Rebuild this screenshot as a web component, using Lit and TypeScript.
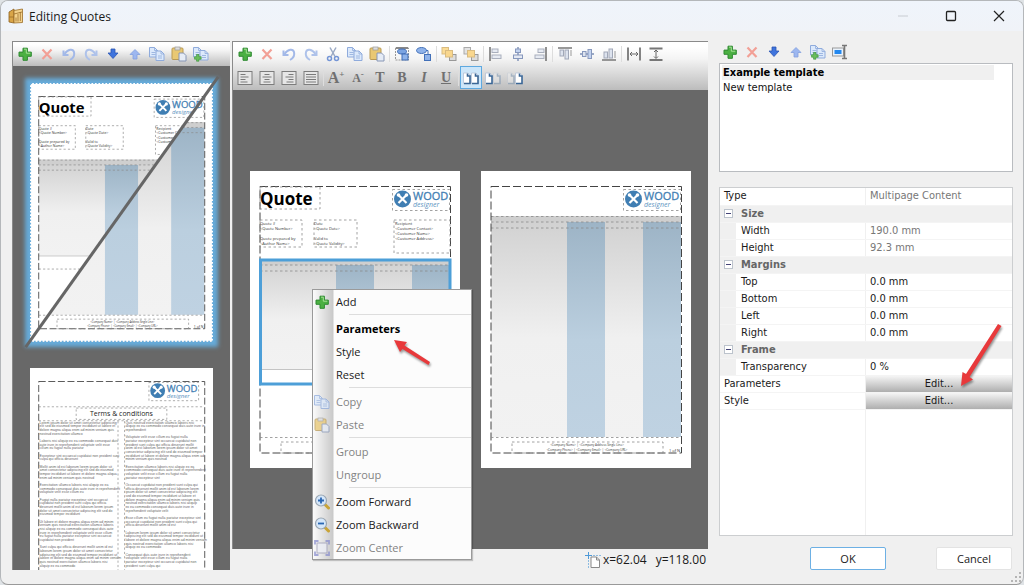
import { LitElement, html, svg, css } from "lit";
import { customElement, property } from "lit/decorators.js";
import { classMap } from "lit/directives/class-map.js";

const plus = svg`<path d="M6 2.200h4.400v3.900h3.900v4.200h-3.900v4H6v-4H2V6.100h4z" fill="#4cb043" stroke="#2f8a32" stroke-width="1"/><path d="M7 3.200h2.300v4h4" fill="none" stroke="#a5e096"/>`;
const sheet = (x: number, y: number) => svg`<path d="M${x} ${y}h5l3 3v6.500h-8z" fill="#dce9fb" stroke="#8fabdc"/><path d="M${x + 5} ${y}v3h3M${x + 2} ${y + 5}h4M${x + 2} ${y + 7}h4" fill="none" stroke="#8fabdc" stroke-width=".8"/>`;
const clip = svg`<rect x="1" y="2" width="11" height="11.500" rx="1" fill="#e9c873" stroke="#b99a55"/><rect x="4" y="1" width="5" height="3" fill="#ddd" stroke="#999" stroke-width=".7"/><path d="M8 7h4.500l2.500 2.500V15H8z" fill="#e6ecf6" stroke="#8796b5"/>`;
const alignBox = (lines: string) => svg`<rect x="1" y="1.500" width="14" height="13" fill="#e6e6e6" stroke="#7c7c7c"/><path d="${lines}" stroke="#7a7a7a" fill="none"/>`;
const squares = (front: boolean) => svg`
  <rect x="1" y="1.500" width="6.500" height="6.500" fill="${front ? "#fbdc96" : "#e3e3e3"}" stroke="${front ? "#d9bb80" : "#aaa"}"/>
  <rect x="8.500" y="8.500" width="6.500" height="6" fill="#dcdcdc" stroke="#999"/>
  <rect x="4.500" y="4.500" width="7" height="6.500" fill="#f9d78e" stroke="#d9bb80"/>`;
const pagesIcon = (a: number, b: number) => svg`
  <g opacity="${a}"><path d="M.5 3h4l3 2.500v8h-7z" fill="#fff" stroke="#b5c2d6" stroke-width=".8"/><path d="M4.500 3.500v2.500h2.500v7.500H1" fill="none" stroke="#3b6796" stroke-width="1.600"/></g>
  <g opacity="${b}"><path d="M8.500 3h4l3 2.500v8h-7z" fill="#fff" stroke="#b5c2d6" stroke-width=".8"/><path d="M12.500 3.500v2.500H15v7.500H9" fill="none" stroke="#3b6796" stroke-width="1.600"/></g>`;
const glass = (sign: string) => svg`<path d="M11 10.500l3.500 3.500" stroke="#c9a437" stroke-width="3" stroke-linecap="round"/><circle cx="7" cy="6.500" r="5.500" fill="#d5e7fa" stroke="#9aa6b2" stroke-width="1.200"/><path d="${sign}" stroke="#2a67b3" stroke-width="1.800"/>`;
const arrowDown = svg`<path d="M6 3h4V7h3l-5 5.500L3 7h3z" fill="#3f74dd" stroke="#2b56b4" stroke-width=".8"/>`;
const arrowUp = svg`<path d="M6 13h4V8.500h3L8 3.500 3 8.500h3z" fill="#9db7f0" stroke="#839fdd" stroke-width=".8"/>`;

const ICONS: Record<string, unknown> = {
  add: plus,
  remove: svg`<path d="M3.500 3.500l9 9.500M12.500 3.500l-9 9.500" stroke="#f2a096" stroke-width="2.200"/>`,
  undo: svg`<path d="M2.500 4.500v4.500h5" fill="none" stroke="#a3b9e8" stroke-width="2"/><path d="M3.500 8C7 3 12 2.500 13 6S11.500 12.500 9 14" fill="none" stroke="#a3b9e8" stroke-width="2"/>`,
  redo: svg`<path d="M13.500 4.500v4.500h-5" fill="none" stroke="#aec2ea" stroke-width="2"/><path d="M12.500 8C9 3 4 2.500 3 6S4.500 12.500 7 14" fill="none" stroke="#aec2ea" stroke-width="2"/>`,
  down: arrowDown,
  up: arrowUp,
  cut: svg`<path d="M5 1.500l5 9M11 1.500l-5 9" stroke="#9aa9c4" stroke-width="1.500"/><circle cx="4.500" cy="12.500" r="2" fill="none" stroke="#7596d6" stroke-width="1.500"/><circle cx="11.500" cy="12.500" r="2" fill="none" stroke="#7596d6" stroke-width="1.500"/>`,
  copy: svg`${sheet(0.5, 1.5)}${sheet(7, 5)}`,
  paste: clip,
  duplicate: svg`${sheet(0.5, 1.5)}${sheet(7, 4.5)}<path d="M3.500 8.500h2.500v2.200h2.200v2.500H6v2H3.500v-2h-2v-2.500h2z" fill="#69bd5c" stroke="#3a923a" stroke-width=".6"/>`,
  rename: svg`<rect x="0.500" y="4" width="11" height="8" fill="#eaf2fb" stroke="#999"/><rect x="2.500" y="6" width="7" height="4" fill="#2388ef"/><path d="M10 1.500h5M12.500 1.500v13M10 14.500h5" stroke="#777" stroke-width="1.600" fill="none"/>`,
  group: svg`<path d="M1.500 2h13v12h-13z" fill="none" stroke="#999" stroke-dasharray="2 1"/><rect x="2" y="1" width="12" height="2" fill="#888"/><ellipse cx="8" cy="5.500" rx="4.500" ry="2.500" fill="#7ba4e2" stroke="#3f6cb5"/><rect x="8" y="8" width="6" height="6" fill="#8fb3ea" stroke="#3f6cb5"/>`,
  ungroup: svg`<ellipse cx="5.500" cy="4.500" rx="5" ry="3" fill="#8fb3ea" stroke="#4270b8"/><path d="M10 4.500h2v4" fill="none" stroke="#4270b8"/><rect x="8.500" y="8.500" width="6" height="6" fill="#8fb3ea" stroke="#4270b8"/>`,
  front: squares(true),
  back: squares(false),
  alignLeft: svg`<path d="M2 1v14" stroke="#777" stroke-width="1.600"/><rect x="4" y="3" width="6" height="3.500" fill="#e6eaf2" stroke="#a9afbd"/><rect x="4" y="9" width="9" height="3.500" fill="#e6eaf2" stroke="#a9afbd"/>`,
  alignMid: svg`<path d="M8 1v14" stroke="#7c8fb5" stroke-width="1.400"/><rect x="5.500" y="3" width="5" height="3.500" fill="#c3d3ef" stroke="#8798bd"/><rect x="3.500" y="9" width="9" height="3.500" fill="#e4e9f3" stroke="#8798bd"/>`,
  alignRight: svg`<path d="M14 1v14" stroke="#777" stroke-width="1.600"/><rect x="6" y="3" width="6" height="3.500" fill="#e6eaf2" stroke="#a9afbd"/><rect x="3" y="9" width="9" height="3.500" fill="#e6eaf2" stroke="#a9afbd"/>`,
  alignTop: svg`<path d="M1 2h14" stroke="#777" stroke-width="1.600"/><rect x="3" y="4" width="3.500" height="6" fill="#dde3ee" stroke="#a1a8b8"/><rect x="8" y="4" width="3.500" height="9" fill="#dde3ee" stroke="#a1a8b8"/><path d="M14 4v6" stroke="#999"/>`,
  alignCenter: svg`<path d="M1 8h14" stroke="#7c8fb5" stroke-width="1.400"/><rect x="3.500" y="5.500" width="3.500" height="5" fill="#dde3ee" stroke="#8798bd"/><rect x="9" y="3.500" width="3.500" height="9" fill="#c3d3ef" stroke="#8798bd"/>`,
  alignBottom: svg`<path d="M1 14h14" stroke="#777" stroke-width="1.600"/><rect x="3" y="6" width="3.500" height="6" fill="#dde3ee" stroke="#a1a8b8"/><rect x="8" y="3" width="3.500" height="9" fill="#dde3ee" stroke="#a1a8b8"/><path d="M14 5v7" stroke="#999"/>`,
  sameWidth: svg`<path d="M2 1.500v13M14 1.500v13" stroke="#777" stroke-width="1.800"/><path d="M4 8h8M6 6L4 8l2 2M10 6l2 2-2 2" fill="none" stroke="#666"/>`,
  sameHeight: svg`<path d="M1.500 2.500h13M1.500 14h13" stroke="#777" stroke-width="1.800"/><path d="M8 4v8M6 6l2-2 2 2M6 10.500l2 2 2-2" fill="none" stroke="#666"/>`,
  paraLeft: alignBox("M3.500 4.500h5M3.500 7h8M3.500 9.500h5M3.500 12h7"),
  paraCenter: alignBox("M5.500 4.500h5M3.500 7h9M5.500 9.500h5M4.500 12h7"),
  paraRight: alignBox("M7.500 4.500h5M4.500 7h8M7.500 9.500h5M5.500 12h7"),
  paraJustify: alignBox("M3 4.500h10M3 7h10M3 9.500h10M3 12h10"),
  pagesBoth: pagesIcon(1, 1),
  pagesFirst: pagesIcon(1, 0.3),
  pagesLast: pagesIcon(0.3, 1),
  zoomIn: glass("M4 6.500h6M7 3.500v6"),
  zoomOut: glass("M4 6.500h6"),
  zoomCenter: svg`<rect x="3" y="3" width="10" height="10" fill="#eceef6" stroke="#9a9ab4"/><path d="M1 4.500V1h3.500M11.500 1H15v3.500M15 11.500V15h-3.500M4.500 15H1v-3.500" fill="none" stroke="#8a8fce" stroke-width="1.800"/>`,
  cursor: svg`<path d="M6 5h5.500l3 3v7.500H6z" fill="#fff" stroke="#8a8a8a"/><path d="M11.500 5v3h3" fill="none" stroke="#8a8a8a"/><path d="M0 3.500h7M3.500 0v7" stroke="#4f9ad8"/><path d="M8 3.500h8M3.500 8v8" stroke="#8dbbe0" stroke-dasharray="2 1"/>`,
  app: svg`<path d="M1 4l5-3v14l-5-1z" fill="#d9a548" stroke="#8d611f" stroke-width=".8"/><path d="M6 2.500L14.500 1v13.500L6 15z" fill="#f5d38c" stroke="#9a6d28" stroke-width=".8"/><path d="M8 9.500v4M10 6v7.500M12.300 4v9M6 6l8-2M1 9h5" stroke="#9a6d28" stroke-width=".8"/>`,
};

const icon = (name: string, size = 16) =>
  html`<svg class="icon" width=${size} height=${size} viewBox="0 0 16 16" aria-hidden="true">${ICONS[name]}</svg>`;

const WORDS = "lorem ipsum dolor sit amet consectetur adipiscing elit sed do eiusmod tempor incididunt ut labore et dolore magna aliqua enim ad minim veniam quis nostrud exercitation ullamco laboris nisi aliquip ex ea commodo consequat duis aute irure in reprehenderit voluptate velit esse cillum eu fugiat nulla pariatur excepteur sint occaecat cupidatat non proident sunt culpa qui officia deserunt mollit anim id est laborum".split(" ");

/** Breaks running filler copy into paragraphs with the given numbers of lines. */
function fillerLines(paragraphs: number[], seed: number, chars: number) {
  const out: { row: number; text: string }[] = [];
  let row = 0;
  let w = seed;
  for (const count of paragraphs) {
    for (let i = 0; i < count; i++) {
      const limit = i === count - 1 ? chars * (0.3 + ((w * 7) % 5) / 10) : chars;
      let text = "";
      while ((text + WORDS[w % WORDS.length]).length < limit) {
        text += (text ? " " : "") + WORDS[w % WORDS.length];
        w++;
      }
      if (i === 0) text = text.charAt(0).toUpperCase() + text.slice(1);
      out.push({ row, text });
      row++;
    }
    row++;
  }
  return out;
}

const dashed = (x: number, y: number, w: number, h: number) =>
  svg`<rect class="dash" x=${x} y=${y} width=${w} height=${h}/>`;

const logo = (dx: number, dy: number) => svg`
  <g transform="translate(${dx} ${dy})">
    ${dashed(142.5, 18.5, 57, 21)}
    <circle cx="152.500" cy="28" r="8.500" fill="#3f7eb3"/>
    <path d="M148.500 24l8 8M156.500 24l-8 8" stroke="#fff" stroke-width="2.200"/>
    <circle cx="148.500" cy="24" r="1.800" fill="#fff"/><circle cx="156.500" cy="24" r="1.800" fill="#fff"/>
    <text class="wood" x="163" y="29">WOOD</text>
    <text class="designer" x="163" y="36">designer</text>
  </g>`;

const frame = svg`<rect class="margin" x="10" y="15.500" width="190.500" height="266.500"/>`;

const footer = svg`
  <path class="dash" d="M10 266.500h190"/>
  ${dashed(31, 271, 151, 11)}
  <text class="foot mid" x="106" y="275">&lt;Company Name&gt; | &lt;Company Address Single Line&gt;</text>
  <text class="foot mid" x="106" y="280">&lt;Company Phone&gt; | &lt;Company Email&gt; | &lt;Company URL&gt;</text>
  <text class="tiny" x="188" y="281">1 of N</text>`;

const table = (top: number, bottom: number) => svg`
  <rect x="10" y=${top} width="190" height=${bottom - top} fill="url(#grey)"/>
  <rect x="86" y=${top + 6} width="38" height=${bottom - top - 6} fill="url(#blue)"/>
  <rect x="162" y=${top + 6} width="38" height=${bottom - top - 6} fill="url(#blue)"/>
  <rect x="10" y=${top} width="190" height="6" fill="#cfcfcf"/>
  <path class="dash" d="M10 ${top + 0.5}h190M10 ${top + 6}h190M10 ${top + 12}h190"/>`;

const gradients = svg`<defs>
  <linearGradient id="grey" x1="0" y1="0" x2="0" y2="1"><stop offset="0" stop-color="#d0d0d0"/><stop offset=".55" stop-color="#f0f0f0"/><stop offset="1" stop-color="#f2f2f2"/></linearGradient>
  <linearGradient id="blue" x1="0" y1="0" x2="0" y2="1"><stop offset="0" stop-color="#9db4c6"/><stop offset=".55" stop-color="#bbcfdf"/><stop offset="1" stop-color="#bfd2e2"/></linearGradient>
  <clipPath id="lower"><path d="M210 0V297H0z"/></clipPath>
</defs>`;

const firstPage = (selected: boolean) => svg`
  <rect width="210" height="297" fill="#fff"/>
  ${table(88, 198)}
  <path d="M10 198.500h190" stroke="#aaa" stroke-width=".7"/>
  <path class="dash" d="M10 213.500h190"/>
  ${frame}
  ${dashed(10, 16, 60, 22)}
  <text class="quote" x="10" y="34">Quote</text>
  ${logo(0, 0)}
  ${dashed(10, 49, 42, 27)}
  ${dashed(64, 49, 43, 27)}
  ${dashed(144, 49, 56, 33)}
  <text class="tiny" x="10" y="54">Quote #</text>
  <text class="tiny" x="10" y="59">&lt;Quote Number&gt;</text>
  <text class="tiny" x="10" y="69">Quote prepared by</text>
  <text class="tiny" x="10" y="74">&lt;Author Name&gt;</text>
  <text class="tiny" x="64" y="54">Date</text>
  <text class="tiny" x="64" y="59">&lt;Quote Date&gt;</text>
  <text class="tiny" x="64" y="69">Valid to</text>
  <text class="tiny" x="64" y="74">&lt;Quote Validity&gt;</text>
  <text class="tiny" x="145" y="54">Recipient</text>
  <text class="tiny" x="145" y="59">&lt;Customer Contact&gt;</text>
  <text class="tiny" x="145" y="64">&lt;Customer Name&gt;</text>
  <text class="tiny" x="145" y="69">&lt;Customer Address&gt;</text>
  ${footer}
  ${selected ? svg`<rect x="10.500" y="89" width="189.500" height="124" fill="none" stroke="#4d9fd8" stroke-width="3"/>` : ""}`;

const nextPage = svg`
  <rect width="210" height="297" fill="#fff"/>
  ${table(45, 266)}
  ${frame}
  ${logo(0, 0)}
  ${footer}`;

const termsPage = svg`
  <rect width="210" height="297" fill="#fff"/>
  ${frame}
  ${logo(-6, -2)}
  <path class="dash" d="M10 44.500h190M10 60.500h190"/>
  ${dashed(53, 46, 104, 13)}
  <text class="terms mid" x="105" y="55.500">Terms &amp; conditions</text>
  <path class="dash" d="M101 61v221M108.500 61v221"/>
  ${fillerLines([4, 3, 2, 4, 3, 5, 6, 6], 0, 51).map((l) => svg`<text class="fine" x="11" y=${64 + l.row * 4.2}>${l.text}</text>`)}
  ${fillerLines([3, 7, 4, 8, 3, 5, 4], 23, 51).map((l) => svg`<text class="fine" x="109.500" y=${64 + l.row * 4.2}>${l.text}</text>`)}`;

@customElement("doc-page")
class DocPage extends LitElement {
  @property() kind = "first";

  static styles = css`
    :host { display: block; font-family: "Open Sans", "Noto Sans", sans-serif; }
    svg { display: block; width: 100%; height: auto; overflow: visible; }
    .dash { fill: none; stroke: #8a8a8a; stroke-width: 0.8; stroke-dasharray: 2.500 2.500; }
    .margin { fill: none; stroke: #444; stroke-width: 1; stroke-dasharray: 8 3; }
    .quote { font-size: 17px; font-weight: 700; fill: #000; }
    .wood { font-size: 11px; fill: #3f7eb3; stroke: #3f7eb3; stroke-width: 0.3; }
    .designer { font-size: 7px; font-style: italic; fill: #5b93c1; }
    .tiny { font-size: 4px; fill: #333; }
    .foot { font-size: 3px; fill: #333; }
    .fine { font-size: 4px; fill: #666; font-family: "Liberation Sans", sans-serif; }
    .terms { font-size: 8px; fill: #222; }
    .mid { text-anchor: middle; }
  `;

  render() {
    const body =
      this.kind === "selected" ? firstPage(true)
      : this.kind === "next" ? nextPage
      : this.kind === "terms" ? termsPage
      : svg`${firstPage(false)}<g clip-path="url(#lower)">${nextPage}</g>
          <rect x=".5" y=".5" width="209" height="296" fill="none" stroke="#69addb" stroke-width="1.500" stroke-dasharray="2 2"/>
          <path d="M-5 303L216 -7" stroke="#666" stroke-width="3.500"/>`;
    return html`<svg viewBox="0 0 210 297" role="img" aria-label="Document page">${gradients}${body}</svg>`;
  }
}

const MAIN_ROW = ["add:Add", "remove:Remove", "undo:Undo", "redo:Redo", "cut:Cut", "copy:Copy", "paste:Paste", "|", "group:Group", "ungroup:Ungroup", "|", "front:Bring to front", "back:Send to back", "|", "alignLeft:Align left", "alignMid:Align middle", "alignRight:Align right", "|", "alignTop:Align top", "alignCenter:Align center", "alignBottom:Align bottom", "|", "sameWidth:Same width", "sameHeight:Same height"];
const SIDE_ROW = ["add:Add", "remove:Remove", "undo:Undo", "redo:Redo", "down:Move down", "up:Move up", "copy:Copy", "paste:Paste", "duplicate:Duplicate"];
const TEMPLATE_ROW = ["add:Add", "remove:Remove", "down:Move down", "up:Move up", "duplicate:Duplicate", "rename:Rename"];

type MenuItem = { label: string; icon?: string; bold?: boolean; off?: boolean } | null;
const MENU: MenuItem[] = [
  { label: "Add", icon: "add" },
  null,
  { label: "Parameters", bold: true },
  { label: "Style" },
  { label: "Reset" },
  null,
  { label: "Copy", icon: "copy", off: true },
  { label: "Paste", icon: "paste", off: true },
  null,
  { label: "Group", off: true },
  { label: "Ungroup", off: true },
  null,
  { label: "Zoom Forward", icon: "zoomIn" },
  { label: "Zoom Backward", icon: "zoomOut" },
  { label: "Zoom Center", icon: "zoomCenter", off: true },
];

const GROUPS = [
  { name: "Size", rows: [["Width", "190.0 mm"], ["Height", "92.3 mm"]], fixed: true },
  { name: "Margins", rows: [["Top", "0.0 mm"], ["Bottom", "0.0 mm"], ["Left", "0.0 mm"], ["Right", "0.0 mm"]], fixed: false },
  { name: "Frame", rows: [["Transparency", "0 %"]], fixed: false },
];

@customElement("app-root")
class AppRoot extends LitElement {
  static styles = css`
    :host { display: block; height: 100vh; background: #dfe3e6; font-family: "Open Sans", "Noto Sans", sans-serif; font-size: 12px; color: #1a1a1a; }
    * { box-sizing: border-box; }
    button, input { font: inherit; color: inherit; margin: 0; padding: 0; border: 0; background: none; }
    .icon { display: block; flex: none; }
    .window { position: relative; height: 100%; display: flex; flex-direction: column; border: 1px solid #b4b7ba; border-bottom-color: #999; border-radius: 8px; background: #f0f0f0; overflow: hidden; }
    .titlebar { flex: none; display: flex; align-items: center; height: 30px; padding-left: 7px; background: linear-gradient(#eff4fb, #f0f3f8); }
    .titlebar h1 { flex: 1; margin: 0 0 0 5px; font-size: 12px; font-weight: 400; }
    .winbtn { display: grid; place-items: center; width: 48px; height: 30px; }
    .body { flex: 1; min-height: 0; display: grid; grid-template-columns: 218px minmax(0, 1fr) 294px; padding: 10px 10px 14px 11px; }
    .pane { display: flex; flex-direction: column; min-height: 0; border-left: 1px solid #8a8a8a; }
    .center { margin-left: 2px; margin-right: 11px; position: relative; }
    .bar { flex: none; display: flex; flex-direction: column; padding-left: 1px; border-top: 1px solid #8a8a8a; background: linear-gradient(#fff 10%, #f4f4f4 35%, #bcbcbc); }
    .row { display: flex; height: 24px; }
    .tool { display: grid; place-items: center; width: 22px; height: 23px; }
    .tool.on { border: 1px solid #5ea9e0; background: #cde6f9; }
    .tool.glyph { display: block; font-family: "Liberation Serif", serif; font-size: 14px; font-weight: 700; line-height: 22px; text-align: center; white-space: nowrap; color: #707070; }
    .tool.large { font-size: 16px; }
    .tool.small { font-size: 12px; }
    .glyph sup { font-size: 9px; line-height: 1px; }
    .glyph.italic { font-style: italic; }
    .glyph.under { text-decoration: underline; }
    .sep { flex: none; width: 1px; height: 16px; margin: 4px 1px; background: #ddd; }
    .thumbs { flex: 1; min-height: 0; display: flex; flex-direction: column; gap: 26px; padding: 17px; overflow: hidden; background: #686868; }
    .thumb.current { box-shadow: 0 0 4px 5px #66abd9; }
    .canvas { flex: 1; min-height: 0; display: flex; align-items: center; justify-content: center; gap: 21px; background: #686868; }
    .sheet { flex: 0 1 210px; }
    .status { flex: none; display: flex; align-items: center; justify-content: flex-end; gap: 9px; height: 21px; margin-left: -1px; padding-right: 2px; background: #f0f0f0; }
    .coord { display: flex; align-items: center; gap: 2px; line-height: 20px; }
    .menu { position: absolute; left: 79px; top: 248px; width: 160px; margin: 0; padding: 0; list-style: none; font-size: 11px; border: 1px solid #9a9a9a; background: linear-gradient(90deg, #fbfbfb, #c9c9c9 20px, #fcfcfc 21px); box-shadow: 1px 1px 1px #0003; }
    .menu button { display: grid; grid-template-columns: 20px 1fr; align-items: center; column-gap: 2px; width: 100%; height: 23px; padding-left: 1px; text-align: left; line-height: 20px; }
    .menu .off { color: #838383; }
    .menu .off .icon { opacity: 0.75; }
    .menu .bold { font-weight: 700; color: #000; }
    .menu .label { grid-column: 2; }
    .rule { height: 4px; padding: 1px 0 0 36px; }
    .rule hr { margin: 0; border: 0; border-top: 1px solid #ddd; }
    .pointer { position: absolute; pointer-events: none; overflow: visible; filter: drop-shadow(1px 2px 1px #0006); }
    .menu .pointer { left: 81px; top: 50px; }
    .props .pointer { right: 11px; top: 136px; }
    .right { display: flex; flex-direction: column; min-width: 0; font-family: "DejaVu Sans Condensed", "DejaVu Sans", sans-serif; font-size: 11px; }
    .right .row { height: 22px; flex: none; }
    .right .tool { height: 22px; }
    .list { flex: none; height: 109px; margin: 0; padding: 1px 18px 0 2px; list-style: none; border: 1px solid #b9bcc0; background: #fff; }
    .list li { height: 15px; padding-left: 1px; line-height: 16px; color: #111; }
    .list .chosen { background: #f0f0f0; font-weight: 700; color: #000; }
    .props { position: relative; flex: 1; min-height: 0; margin-top: 15px; border: 1px solid #ccced0; background: linear-gradient(90deg, #fff 145px, #f0f0f0 145px, #f0f0f0 146px, #fff 146px); }
    table { width: 100%; border-collapse: collapse; table-layout: fixed; }
    th, td { height: 17px; padding: 0 4px; line-height: 16px; font-weight: 400; text-align: left; border-bottom: 1px solid #f4f4f4; }
    th.nest { padding-left: 21px; background: linear-gradient(90deg, #f0f0f0 16px, transparent 16px); }
    .group th { background: #f0f0f0; font-weight: 700; color: #666; }
    .head { display: flex; align-items: center; gap: 8px; height: 16px; }
    .fold { display: grid; place-items: center; width: 9px; height: 9px; border: 1px solid #bcc3cc; background: #fff; }
    .fold i { width: 5px; height: 1px; background: #447; }
    .fixed { color: #777; }
    td input { display: block; width: 100%; height: 16px; }
    td.action { padding: 0; }
    .edit { display: block; width: 100%; height: 16px; line-height: 16px; background: linear-gradient(#f5f5f5, #aeaeae); }
    .buttons { flex: none; display: flex; justify-content: flex-end; gap: 50px; padding: 11px 1px 0 0; font-family: "Open Sans", "Noto Sans", sans-serif; }
    .buttons button { width: 76px; height: 23px; background: #fff; border: 1px solid #e3e3e3; border-radius: 2px; }
    .buttons .default { border-color: #6db0e4; }
    .grip { position: absolute; right: 1px; bottom: 1px; }
  `;

  private tools(names: string[]) {
    return names.map((n) => {
      if (n === "|") return html`<span class="sep"></span>`;
      const [id, label] = n.split(":");
      return html`<button class=${classMap({ tool: true, on: id === "pagesBoth" })} title=${label} aria-label=${label}>${icon(id)}</button>`;
    });
  }

  private menu() {
    return html`<ul class="menu" role="menu">
      ${MENU.map((m) => m
        ? html`<li role="none"><button role="menuitem" class=${classMap({ off: !!m.off, bold: !!m.bold })}>${m.icon ? icon(m.icon) : ""}<span class="label">${m.label}</span></button></li>`
        : html`<li class="rule" role="none"><hr /></li>`)}
      <svg class="pointer" width="36" height="24" viewBox="0 0 36 24" aria-hidden="true"><path d="M0 0L13 2 10.500 5.500 36 22 34.500 25 8.500 9 6 12z" fill="#e8393b"/></svg>
    </ul>`;
  }

  render() {
    return html`<div class="window">
      <header class="titlebar">
        ${icon("app")}
        <h1>Editing Quotes</h1>
        <button class="winbtn" aria-label="Minimize"><svg width="12" height="12"><path d="M1 6h10" stroke="#c8ccd2"/></svg></button>
        <button class="winbtn" aria-label="Maximize"><svg width="12" height="12"><rect x="1.500" y="1.500" width="9" height="9" rx="1" fill="none" stroke="#222" stroke-width="1.300"/></svg></button>
        <button class="winbtn" aria-label="Close"><svg width="12" height="12"><path d="M1 1l10 10M11 1L1 11" stroke="#222" stroke-width="1.200"/></svg></button>
      </header>
      <main class="body">
        <section class="pane">
          <div class="bar"><div class="row">${this.tools(SIDE_ROW)}</div></div>
          <div class="thumbs">
            <doc-page class="thumb current" kind="split"></doc-page>
            <doc-page class="thumb" kind="terms"></doc-page>
          </div>
        </section>
        <section class="pane center">
          <div class="bar">
            <div class="row">${this.tools(MAIN_ROW)}</div>
            <div class="row">
              ${this.tools(["paraLeft:Align text left", "paraCenter:Center text", "paraRight:Align text right", "paraJustify:Justify", "|"])}
              <button class="tool glyph large" title="Larger text">A<sup>+</sup></button>
              <button class="tool glyph small" title="Smaller text">A<sup>-</sup></button>
              <button class="tool glyph" title="Font">T</button>
              <button class="tool glyph" title="Bold">B</button>
              <button class="tool glyph italic" title="Italic">I</button>
              <button class="tool glyph under" title="Underline">U</button>
              ${this.tools(["|", "pagesBoth:All pages", "pagesFirst:First page", "pagesLast:Next pages"])}
            </div>
          </div>
          <div class="canvas">
            <doc-page class="sheet" kind="selected"></doc-page>
            <doc-page class="sheet" kind="next"></doc-page>
          </div>
          <footer class="status">
            <span class="coord">${icon("cursor")}x=62.04</span>
            <span class="coord">y=118.00</span>
          </footer>
          ${this.menu()}
        </section>
        <section class="right">
          <div class="row">${this.tools(TEMPLATE_ROW)}</div>
          <ul class="list" role="listbox" aria-label="Templates">
            <li class="chosen" role="option" aria-selected="true">Example template</li>
            <li role="option" aria-selected="false">New template</li>
          </ul>
          <div class="props">
            <table>
              <tr><th>Type</th><td class="fixed">Multipage Content</td></tr>
              ${GROUPS.map((g) => html`
                <tr class="group"><th colspan="2"><div class="head"><button class="fold" aria-label="Collapse ${g.name}"><i></i></button>${g.name}</div></th></tr>
                ${g.rows.map(([name, value]) => html`<tr>
                  <th class="nest">${name}</th>
                  ${g.fixed ? html`<td class="fixed">${value}</td>` : html`<td><input aria-label=${name} .value=${value} /></td>`}
                </tr>`)}`)}
              <tr><th>Parameters</th><td class="action"><button class="edit">Edit...</button></td></tr>
              <tr><th>Style</th><td class="action"><button class="edit">Edit...</button></td></tr>
            </table>
            <svg class="pointer" width="40" height="62" viewBox="0 0 40 62" aria-hidden="true"><path d="M0 62L1.500 48 5 50 37 0 40.500 2 8.500 53 12 55.500z" fill="#e8393b"/></svg>
          </div>
          <div class="buttons"><button class="default">OK</button><button>Cancel</button></div>
        </section>
      </main>
      <svg class="grip" width="11" height="11" aria-hidden="true"><path d="M8 0h2v2H8zM4 4h2v2H4zM8 4h2v2H8zM0 8h2v2H0zM4 8h2v2H4zM8 8h2v2H8z" fill="#b5b5b5"/></svg>
    </div>`;
  }
}
